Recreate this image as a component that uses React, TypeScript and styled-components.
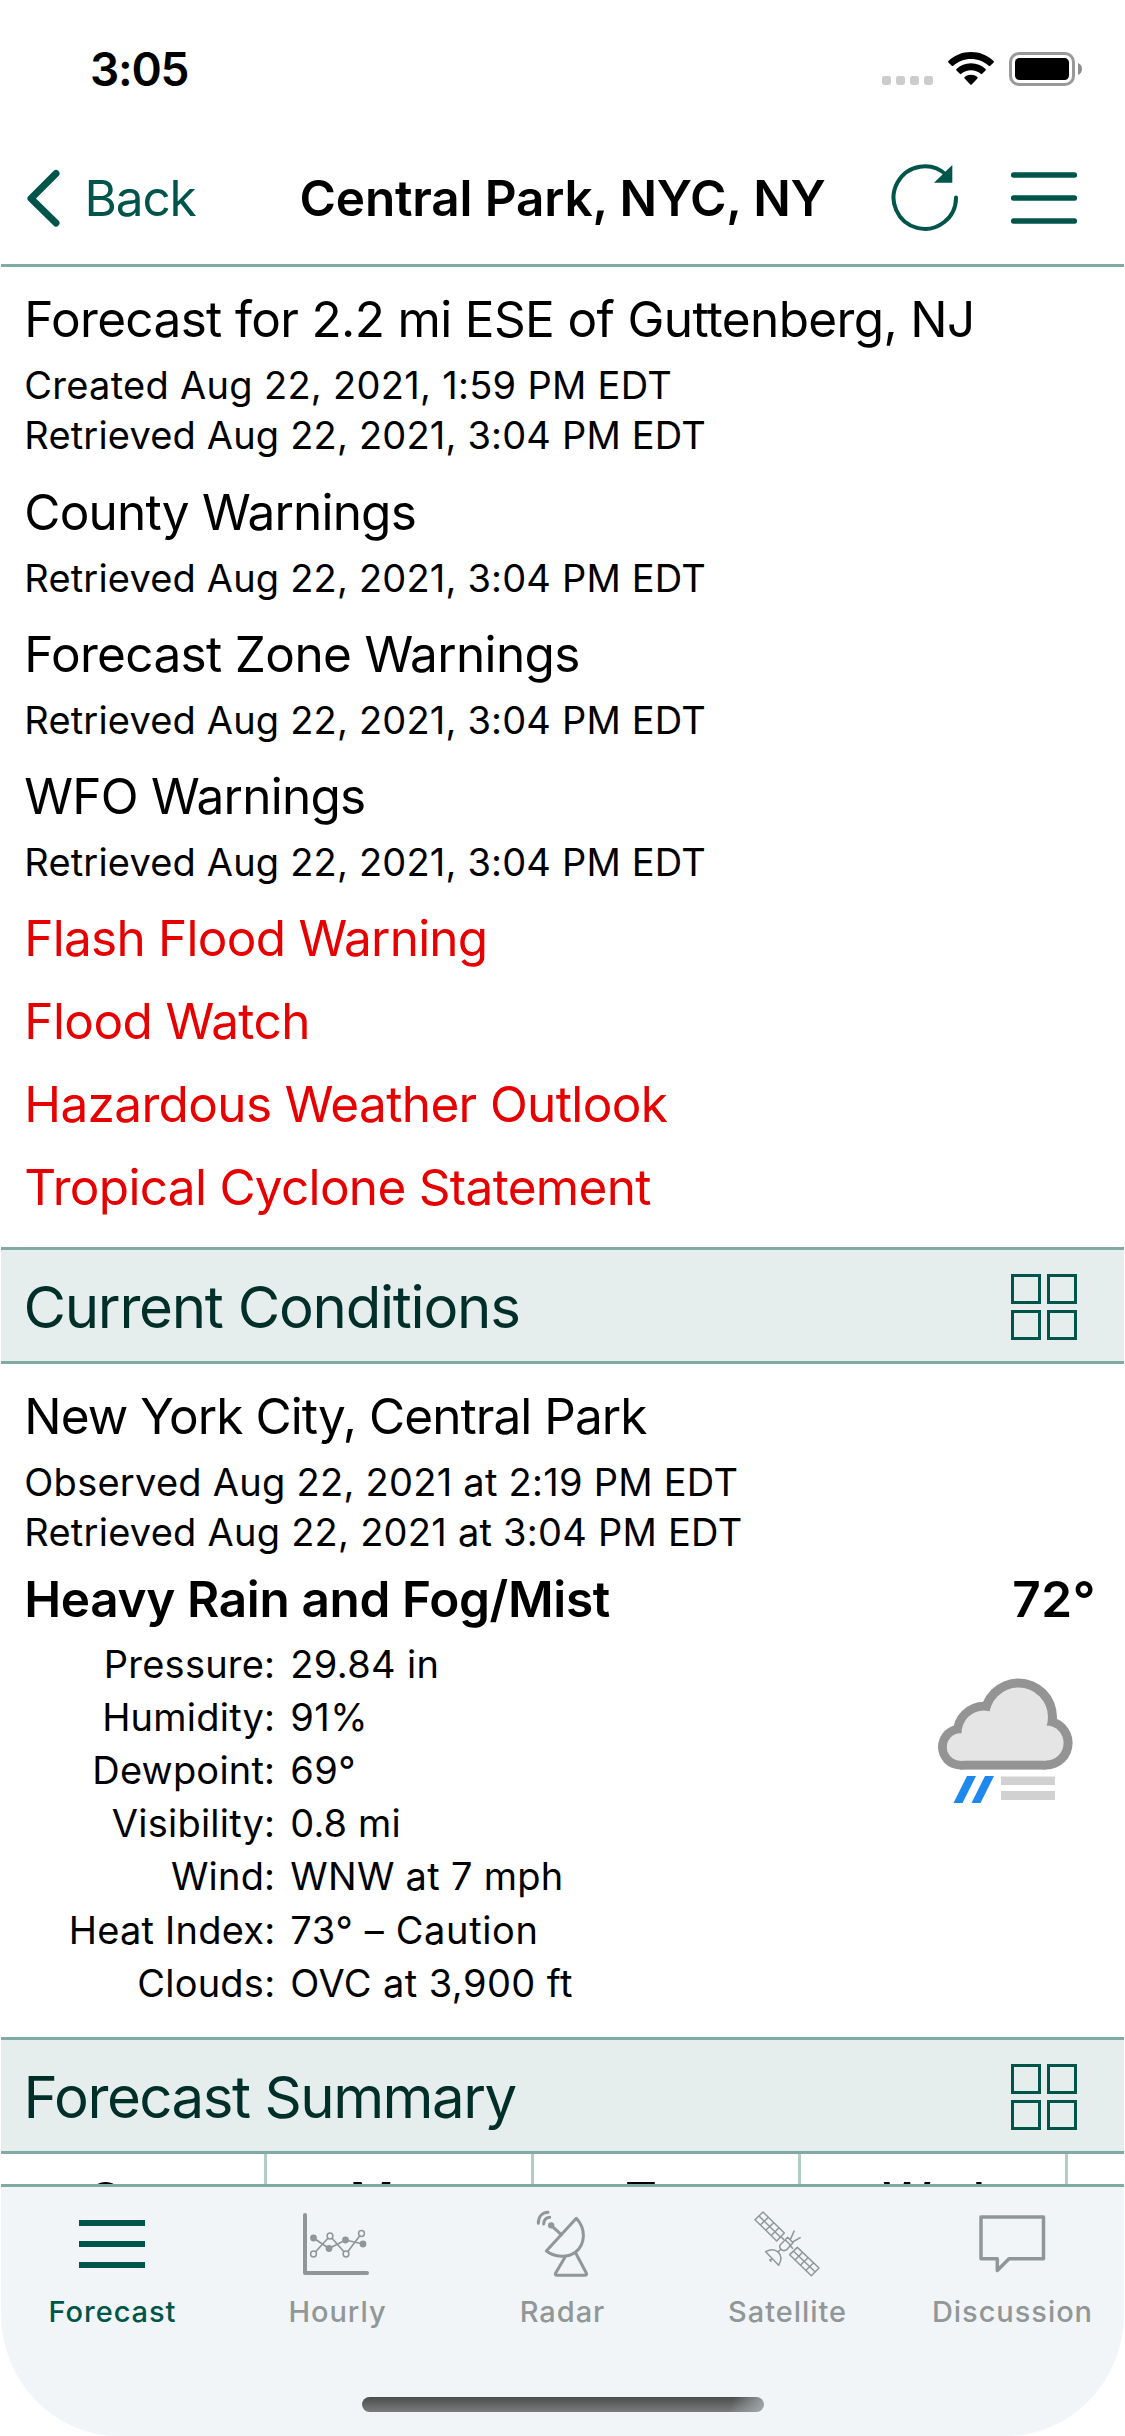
import React from "react";
import styled, { createGlobalStyle } from "styled-components";

const color = {
  accent: "#00554a",
  rule: "#80aaa4",
  cellRule: "#b2ccc8",
  bar: "#e5eeec",
  barText: "#002f29",
  alert: "#e60000",
  tabs: "#f1f5f7",
  idle: "#919797",
};

const GlobalStyle = createGlobalStyle`
  * { box-sizing: border-box; }
  body {
    margin: 0;
    background: #fff;
    color: #000;
    font-family: Inter, "Liberation Sans", sans-serif;
  }
  svg { display: block; flex: none; }
`;

const Screen = styled.div`
  width: 1125px;
  height: 2436px;
  padding: 0 1px;
  display: flex;
  flex-direction: column;
  overflow: hidden;
  background: #fff;
`;

const StatusBar = styled.div`
  height: 132px;
  flex: none;
  display: flex;
  align-items: center;
  justify-content: space-between;
  padding: 6px 41px 0 89px;
`;

const Clock = styled.span`
  font-size: 46px;
  font-weight: 600;
  line-height: 56px;
  letter-spacing: -1.26px;
`;

const NavBar = styled.header`
  height: 135px;
  flex: none;
  display: flex;
  align-items: center;
  padding: 0 47px 0 24.5px;
  border-bottom: 3px solid ${color.rule};
`;

const BackButton = styled.a`
  width: 274px;
  display: flex;
  align-items: center;
  gap: 25px;
  color: ${color.accent};
  font-size: 49.5px;
  line-height: 60px;
  letter-spacing: -1.15px;
`;

const Title = styled.h1`
  flex: 1;
  margin: 0;
  font-size: 49.5px;
  font-weight: 600;
  line-height: 60px;
  letter-spacing: -0.17px;
  white-space: nowrap;
`;

const NavIcons = styled.div`
  display: flex;
  align-items: center;
  gap: 52px;
`;

const Body = styled.main`
  flex: 1;
  min-height: 0;
  overflow: hidden;
  display: flex;
  flex-direction: column;
`;

const Panel = styled.section<{ $bottom: number }>`
  flex: none;
  display: flex;
  flex-direction: column;
  padding: 22px 28px ${(p) => p.$bottom}px 23.3px;
`;

const Group = styled.div<{ $after: number }>`
  display: flex;
  flex-direction: column;
  margin-bottom: ${(p) => p.$after}px;
`;

const Heading = styled.div<{ $track: number; $bold?: boolean }>`
  font-size: 49.5px;
  line-height: 60px;
  font-weight: ${(p) => (p.$bold ? 600 : 400)};
  letter-spacing: ${(p) => p.$track}px;
  white-space: nowrap;
`;

const Meta = styled.div`
  display: flex;
  flex-direction: column;
  margin-top: 11px;
`;

const MetaLine = styled.div<{ $track: number }>`
  font-size: 38px;
  line-height: 50px;
  letter-spacing: ${(p) => p.$track}px;
  white-space: nowrap;
`;

const Alerts = styled.div`
  display: flex;
  flex-direction: column;
  gap: 23px;
  color: ${color.alert};
`;

const SectionBar = styled.div`
  height: 117px;
  flex: none;
  display: flex;
  align-items: center;
  justify-content: space-between;
  padding: 0 47px 0 22.5px;
  background: ${color.bar};
  border-top: 3px solid ${color.rule};
  border-bottom: 3px solid ${color.rule};
`;

const SectionTitle = styled.h2<{ $track: number }>`
  margin: 0;
  padding-top: 3px;
  font-size: 58.2px;
  font-weight: 400;
  line-height: 70px;
  letter-spacing: ${(p) => p.$track}px;
  color: ${color.barText};
`;

const GridIcon = styled.div`
  display: grid;
  grid-template-columns: 30px 30px;
  grid-template-rows: 30px 30px;
  gap: 6px;
  padding-top: 3px;
`;

const GridCell = styled.span`
  border: 3px solid ${color.accent};
`;

const Summary = styled.div`
  display: flex;
  justify-content: space-between;
  margin-top: 12px;
`;

const Observation = styled.div`
  display: flex;
  justify-content: space-between;
  margin-top: 8.6px;
`;

const Readings = styled.dl`
  margin: 0;
  display: grid;
  grid-template-columns: 251px auto;
  column-gap: 15px;
  grid-auto-rows: 53.2px;
  font-size: 38px;
  line-height: 53.2px;
  letter-spacing: 0.22px;
  white-space: nowrap;
`;

const Label = styled.dt`
  text-align: right;
`;

const Value = styled.dd<{ $track?: number }>`
  margin: 0;
  letter-spacing: ${(p) => p.$track ?? 0.41}px;
`;

const WeatherIcon = styled.svg`
  margin: 38.4px 22px 0 0;
`;

const DayRow = styled.div`
  height: 30px;
  flex: none;
  display: flex;
  overflow: hidden;
`;

const Day = styled.div`
  width: 267px;
  height: 130px;
  flex: none;
  padding-top: 17px;
  border-right: 3px solid ${color.cellRule};
  text-align: center;
  font-size: 49px;
  line-height: 60px;
  font-weight: 500;
  letter-spacing: -1.6px;

  &:first-child {
    width: 266px;
  }
`;

const TabBar = styled.nav`
  height: 252px;
  flex: none;
  display: flex;
  flex-direction: column;
  align-items: center;
  background: ${color.tabs};
  border-top: 3px solid ${color.rule};
  border-radius: 0 0 118px 118px / 0 0 122px 122px;
`;

const Tabs = styled.div`
  display: flex;
  height: 210px;
  margin: 0 -1px;
`;

const Tab = styled.a<{ $active?: boolean }>`
  width: 225px;
  display: flex;
  flex-direction: column;
  align-items: center;
  gap: 13.5px;
  padding-top: 19px;
  color: ${(p) => (p.$active ? color.accent : color.idle)};
  font-size: 29px;
  font-weight: 500;
  line-height: 36px;
  letter-spacing: 0.95px;
`;

const HomeIndicator = styled.div`
  width: 402px;
  height: 15px;
  border-radius: 8px;
  background:
    linear-gradient(115deg, rgba(160, 166, 167, 0) 91%, rgba(160, 166, 167, 0.95) 99%),
    linear-gradient(#4a4d4c, #7b7b7b);
`;

const Chevron = () => (
  <svg width="34" height="58" viewBox="0 0 34 58" fill="none" stroke={color.accent} strokeWidth="7" strokeLinecap="round" strokeLinejoin="round">
    <path d="M30 4.500L5 29.500L30 54" />
  </svg>
);

const SignalDots = () => (
  <svg width="51" height="9" viewBox="0 0 51 9" fill="#ccc">
    {[0, 14, 28, 42].map((x) => (
      <rect key={x} x={x} width="9" height="9" rx="2.4" />
    ))}
  </svg>
);

const Wifi = () => (
  <svg width="46" height="34" viewBox="0 0 46 34">
    <path d="M23 0C14.200 0 6.200 3.400 0.400 8.900Q-0.300 9.700 0.400 10.400L3.700 13.700Q4.500 14.400 5.300 13.700C10 9.400 16.200 6.900 23 6.900S36 9.400 40.700 13.700Q41.500 14.400 42.300 13.700L45.600 10.400Q46.300 9.700 45.600 8.900C39.800 3.400 31.800 0 23 0Z" />
    <path d="M23 11.300C17.400 11.300 12.300 13.400 8.500 17Q7.700 17.800 8.500 18.500L11.800 21.800Q12.500 22.500 13.300 21.800C15.900 19.600 19.300 18.200 23 18.200S30.100 19.600 32.700 21.800Q33.500 22.500 34.200 21.800L37.500 18.500Q38.300 17.800 37.500 17C33.700 13.400 28.600 11.300 23 11.300Z" />
    <path d="M23 22.700C20.600 22.700 18.400 23.500 16.700 25Q15.900 25.700 16.600 26.500L22.300 32.500Q23 33.200 23.700 32.500L29.400 26.500Q30.100 25.700 29.300 25C27.600 23.500 25.400 22.700 23 22.700Z" />
  </svg>
);

const Battery = () => (
  <svg width="74" height="34" viewBox="0 0 74 34">
    <rect x="1.5" y="1.500" width="63" height="31" rx="8.500" fill="none" stroke="#999" strokeWidth="3" />
    <rect x="6" y="6" width="54" height="22" rx="4.500" />
    <path d="M69 11C71.500 12 73 14.200 73 17S71.500 22 69 23Z" fill="#8f8f8f" />
  </svg>
);

const StatusIcons = styled.div`
  display: flex;
  height: 34px;
  align-items: flex-end;

  svg:nth-child(1) {
    margin: 0 15px 1px 0;
  }
  svg:nth-child(2) {
    margin-right: 15px;
  }
`;

const Refresh = () => (
  <svg width="68" height="68" viewBox="890 164 68 68" fill="none" stroke={color.accent}>
    <path d="M955 197.500A31.200 31.200 0 1 1 945.200 174.900" strokeWidth="4" strokeLinecap="round" />
    <path d="M951.300 165V182.800H933Z" fill={color.accent} stroke="none" />
  </svg>
);

const Menu = () => (
  <svg width="66" height="52" viewBox="0 0 66 52" fill={color.accent}>
    {[0.2, 23.200, 46.200].map((y) => (
      <rect key={y} y={y} width="66" height="5.600" rx="2.500" />
    ))}
  </svg>
);

const RainFogIcon = () => (
  <WeatherIcon width="138" height="128" viewBox="936 1676 138 128">
    <g fill="#949494">
      <circle cx="960.5" cy="1747" r="22.500" />
      <circle cx="984" cy="1733" r="31.200" />
      <circle cx="1018.500" cy="1717" r="38.500" />
      <circle cx="1046" cy="1743" r="26.600" />
      <rect x="960" y="1735" width="86" height="34.600" />
    </g>
    <g fill="#e5e5e5">
      <circle cx="960.5" cy="1747" r="13.700" />
      <circle cx="984" cy="1733" r="22.500" />
      <circle cx="1018.500" cy="1717" r="29.500" />
      <circle cx="1046" cy="1743" r="17.600" />
      <rect x="960" y="1735" width="86" height="25.700" />
    </g>
    <path d="M967 1776H976L962.500 1803H953.500ZM985 1776H994L980.500 1803H971.500Z" fill="#1f88ee" />
    <path d="M1001 1776.500H1055V1785H1001ZM1001 1791H1055V1800H1001Z" fill="#d1d1d1" />
  </WeatherIcon>
);

const ForecastIcon = () => (
  <svg width="91" height="74" viewBox="67 2206 91 74" fill="currentColor">
    <path d="M79 2220H145V2226H79ZM79 2241H145V2247H79ZM79 2262H145V2268H79Z" />
  </svg>
);

const filledPoints = [
  [313.5, 2238],
  [329, 2248.5],
  [345.5, 2240],
  [363, 2244],
];
const openPoints = [
  [313.5, 2254],
  [330, 2236],
  [346, 2254],
  [361.5, 2233.5],
];

const HourlyIcon = () => (
  <svg width="91" height="74" viewBox="292 2206 91 74" fill="none" stroke="currentColor" strokeLinecap="round" strokeLinejoin="round">
    <path d="M305 2215V2273H367" strokeWidth="4" />
    <g strokeWidth="1.700">
      <polyline points={filledPoints.join(" ")} />
      <polyline points={openPoints.join(" ")} />
    </g>
    {filledPoints.map(([x, y]) => (
      <circle key={x} cx={x} cy={y} r="3.400" fill="currentColor" stroke="none" />
    ))}
    {openPoints.map(([x, y]) => (
      <circle key={x} cx={x} cy={y} r="2.900" fill={color.tabs} strokeWidth="1.500" />
    ))}
  </svg>
);

const RadarIcon = () => (
  <svg width="91" height="74" viewBox="-9 18 273 222" fill="none" stroke="currentColor" strokeWidth="9" strokeLinecap="round" strokeLinejoin="round">
    <path d="M55 70C55 51 66 38 84 37" />
    <path d="M71 72C72 60 78 53 89 52" />
    <circle cx="93.500" cy="76" r="9.500" fill="currentColor" stroke="none" />
    <path d="M94 77L124 104" />
    <path d="M169 55L79 153C105 172 142 175 167 156C197 131 198 86 169 55Z" />
    <path d="M134 173L107 219Q104 226 111 226H194Q202 226 199 219L167 159" />
  </svg>
);

const SatelliteIcon = () => (
  <svg width="91" height="74" viewBox="666 18 273 222" fill="none" stroke="currentColor" strokeWidth="4.500" strokeLinejoin="round">
    <path d="M729 36L705 59L770 123L793 99ZM717 48L781 111M745 52L721 75M761 68L737 91M777 83L753 107" />
    <path d="M832 142L809 164L874 227L897 204ZM820 153L886 216M848 157L825 180M864 173L841 196M881 188L858 211" />
    <path d="M782 110L792 119M808 134L819 146" />
    <path d="M803 112L819 128L800 149C790 157 774 145 781 134ZM795 119L812 136M811 119L823 92M818 126L842 112" />
    <path d="M783 148L774 155M737 155C765 140 796 160 776 196ZM757 175L750 182M748 178L754 185" />
  </svg>
);

const DiscussionIcon = () => (
  <svg width="91" height="74" viewBox="967 2206 91 74" fill="none" stroke="currentColor" strokeWidth="3.500" strokeLinejoin="round">
    <path d="M981 2217H1043.500V2258.800H1009L997.300 2270.500V2258.800H981Z" />
  </svg>
);

const SectionHeader = ({ title, track }: { title: string; track: number }) => (
  <SectionBar>
    <SectionTitle $track={track}>{title}</SectionTitle>
    <GridIcon>
      <GridCell />
      <GridCell />
      <GridCell />
      <GridCell />
    </GridIcon>
  </SectionBar>
);

type Line = { text: string; track: number };

const retrieved: Line = { text: "Retrieved Aug 22, 2021, 3:04 PM EDT", track: 0.18 };

const sources: { title: Line; lines: Line[]; after: number }[] = [
  {
    title: { text: "Forecast for 2.2 mi ESE of Guttenberg, NJ", track: -0.64 },
    lines: [{ text: "Created Aug 22, 2021, 1:59 PM EDT", track: 0.29 }, retrieved],
    after: 22,
  },
  { title: { text: "County Warnings", track: -0.8 }, lines: [retrieved], after: 21 },
  { title: { text: "Forecast Zone Warnings", track: -0.65 }, lines: [retrieved], after: 21 },
  { title: { text: "WFO Warnings", track: -0.75 }, lines: [retrieved], after: 21 },
];

const alerts: Line[] = [
  { text: "Flash Flood Warning", track: -0.75 },
  { text: "Flood Watch", track: -0.6 },
  { text: "Hazardous Weather Outlook", track: -0.64 },
  { text: "Tropical Cyclone Statement", track: -0.7 },
];

const readings: [string, string, number?][] = [
  ["Pressure:", "29.84 in", 0.35],
  ["Humidity:", "91%"],
  ["Dewpoint:", "69°"],
  ["Visibility:", "0.8 mi", 0.1],
  ["Wind:", "WNW at 7 mph", 0.28],
  ["Heat Index:", "73° – Caution", 0.65],
  ["Clouds:", "OVC at 3,900 ft"],
];

const tabs = [
  { name: "Forecast", Icon: ForecastIcon },
  { name: "Hourly", Icon: HourlyIcon },
  { name: "Radar", Icon: RadarIcon },
  { name: "Satellite", Icon: SatelliteIcon },
  { name: "Discussion", Icon: DiscussionIcon },
];

export default function App() {
  return (
    <Screen>
      <GlobalStyle />
      <StatusBar>
        <Clock>3:05</Clock>
        <StatusIcons>
          <SignalDots />
          <Wifi />
          <Battery />
        </StatusIcons>
      </StatusBar>
      <NavBar>
        <BackButton>
          <Chevron />
          Back
        </BackButton>
        <Title>Central Park, NYC, NY</Title>
        <NavIcons>
          <Refresh />
          <Menu />
        </NavIcons>
      </NavBar>
      <Body>
        <Panel $bottom={30}>
          {sources.map(({ title, lines, after }) => (
            <Group key={title.text} $after={after}>
              <Heading $track={title.track}>{title.text}</Heading>
              <Meta>
                {lines.map((line) => (
                  <MetaLine key={line.text} $track={line.track}>
                    {line.text}
                  </MetaLine>
                ))}
              </Meta>
            </Group>
          ))}
          <Alerts>
            {alerts.map((alert) => (
              <Heading key={alert.text} $track={alert.track}>
                {alert.text}
              </Heading>
            ))}
          </Alerts>
        </Panel>
        <SectionHeader title="Current Conditions" track={-1.27} />
        <Panel $bottom={27}>
          <Heading $track={-0.94}>New York City, Central Park</Heading>
          <Meta>
            <MetaLine $track={0.26}>Observed Aug 22, 2021 at 2:19 PM EDT</MetaLine>
            <MetaLine $track={0.25}>Retrieved Aug 22, 2021 at 3:04 PM EDT</MetaLine>
          </Meta>
          <Summary>
            <Heading $bold $track={-0.36}>
              Heavy Rain and Fog/Mist
            </Heading>
            <Heading $bold $track={0.6}>
              72°
            </Heading>
          </Summary>
          <Observation>
            <Readings>
              {readings.map(([label, value, track]) => (
                <React.Fragment key={label}>
                  <Label>{label}</Label>
                  <Value $track={track}>{value}</Value>
                </React.Fragment>
              ))}
            </Readings>
            <RainFogIcon />
          </Observation>
        </Panel>
        <SectionHeader title="Forecast Summary" track={-1.5} />
        <DayRow>
          <Day>Sun</Day>
          <Day>Mon</Day>
          <Day>Tue</Day>
          <Day>Wed</Day>
        </DayRow>
      </Body>
      <TabBar>
        <Tabs>
          {tabs.map(({ name, Icon }) => (
            <Tab key={name} $active={name === "Forecast"}>
              <Icon />
              {name}
            </Tab>
          ))}
        </Tabs>
        <HomeIndicator />
      </TabBar>
    </Screen>
  );
}
